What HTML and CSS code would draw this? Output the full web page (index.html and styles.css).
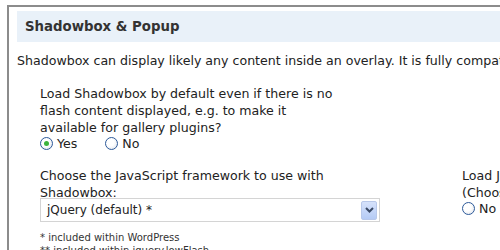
FILE: index.html
```html
<!DOCTYPE html>
<html>
<head>
<meta charset="utf-8">
<link rel="stylesheet" href="styles.css">
</head>
<body>
<div class="frame">
  <div class="panel">
    <h3 class="title">Shadowbox &amp; Popup</h3>
    <p class="intro">Shadowbox can display likely any content inside an overlay. It is fully compatible with all major browsers.</p>
    <div class="option first">
      <div class="label">Load Shadowbox by default even if there is no flash content displayed, e.g. to make it available for gallery plugins?</div>
      <div class="radios">
        <label class="radio"><span class="dot checked"></span>Yes</label>
        <label class="radio"><span class="dot"></span>No</label>
      </div>
    </div>
    <div class="row">
      <div class="option framework">
        <div class="label">Choose the JavaScript framework to use with Shadowbox:</div>
        <div class="select">
          <span class="sel-text">jQuery (default) *</span>
          <span class="sel-btn"><svg width="9" height="6" viewBox="0 0 9 6"><path d="M1 1 L4.5 4.5 L8 1" fill="none" stroke="#3a4a66" stroke-width="2"/></svg></span>
        </div>
        <div class="note first-note">* included within WordPress</div>
        <div class="note">** included within jquery.lowFlash</div>
      </div>
      <div class="option side">
        <div class="label nowrap">Load JavaScript in the header?</div>
        <div class="label nowrap">(Choose yes if there is a conflict)</div>
        <div class="radios">
          <label class="radio"><span class="dot"></span>No</label>
        </div>
      </div>
    </div>
  </div>
</div>
</body>
</html>
```

FILE: styles.css
```css
html, body {
  margin: 0;
  padding: 0;
  background: #fff;
  overflow: hidden;
}
body {
  font-family: "DejaVu Sans", Verdana, sans-serif;
  font-size: 12.6px;
  color: #222;
  width: 500px;
  height: 250px;
}
.frame {
  margin: 5px 0 0 7px;
  border-top: 2px solid #8c8c8c;
  border-left: 2px solid #8c8c8c;
  padding: 4px 0 0 8px;
  height: 400px;
  width: 900px;
}
.panel {
  width: 880px;
}
.title {
  margin: 0;
  background: #e9f1f9;
  height: 31px;
  line-height: 31px;
  padding-left: 8px;
  font-size: 13.3px;
  font-weight: bold;
  color: #333;
}
.intro {
  margin: 11px 0 0 0;
  white-space: nowrap;
  line-height: 16px;
}
.option {
  padding-left: 23px;
}
.first {
  margin-top: 16px;
  width: 300px;
}
.label {
  line-height: 17px;
}
.nowrap { white-space: nowrap; }
.radios {
  display: flex;
  gap: 28px;
  height: 15px;
  align-items: center;
}
.radio {
  display: flex;
  align-items: center;
  gap: 4px;
}
.dot {
  width: 11px;
  height: 11px;
  border-radius: 50%;
  border: 1px solid #2d5a9a;
  background: radial-gradient(circle at 40% 40%, #fff 40%, #d8dde6);
  position: relative;
}
.dot.checked::after {
  content: "";
  position: absolute;
  left: 3px;
  top: 3px;
  width: 5px;
  height: 5px;
  border-radius: 50%;
  background: #3cb33c;
}
.row {
  display: flex;
  margin-top: 16px;
}
.framework {
  width: 340px;
}
.side {
  margin-left: 82px;
  padding-left: 0;
}
.select {
  margin-top: -3px;
  height: 24px;
  border: 1px solid #d4d4d4;
  display: flex;
  align-items: center;
  justify-content: space-between;
  padding: 0 2px 0 6px;
  box-sizing: border-box;
  width: 340px;
}
.sel-text { font-size: 12px; }
.sel-btn {
  width: 16px;
  height: 19px;
  background: linear-gradient(#d6e2fb, #b5cbf5);
  border: 1px solid #b8c8ea;
  border-radius: 2px;
  box-sizing: border-box;
  display: flex;
  align-items: center;
  justify-content: center;
}
.note {
  font-size: 10px;
  line-height: 13px;
  color: #333;
}
.first-note {
  margin-top: 9px;
}
```
